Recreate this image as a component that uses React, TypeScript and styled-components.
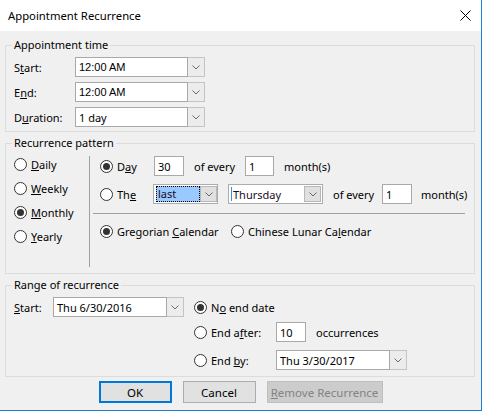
import React from 'react';
import styled, { createGlobalStyle } from 'styled-components';

const GlobalStyle = createGlobalStyle`
  html, body {
    margin: 0;
    padding: 0;
    background: #f0f0f0;
  }
`;

const Window = styled.div`
  box-sizing: border-box;
  width: 482px;
  height: 411px;
  background: #f0f0f0;
  border-right: 1px solid #1c7fd6;
  border-bottom: 1px solid #1c7fd6;
  font-family: 'Noto Sans', sans-serif;
  font-size: 11px;
  color: #000;
  display: flex;
  flex-direction: column;
  overflow: hidden;
`;

const TitleBar = styled.div`
  height: 31px;
  flex: none;
  background: #fff;
  display: flex;
  align-items: center;
  justify-content: space-between;
  padding: 0 10px 0 8px;
  font-size: 11.3px;
`;

const Body = styled.div`
  padding: 6px 6px 0 5px;
  display: flex;
  flex-direction: column;
`;

const Group = styled.fieldset<{ $pad: string }>`
  margin: 0;
  min-width: 0;
  border: 1px solid #dcdcdc;
  padding: ${({ $pad }) => $pad};
  & + & {
    margin-top: 3px;
  }
`;

const Legend = styled.legend`
  padding: 0 2px;
  margin-left: -2px;
  line-height: 16px;
  font-size: 11px;
`;

const TimeGrid = styled.div`
  display: grid;
  grid-template-columns: 61px auto;
  grid-auto-rows: 20px;
  row-gap: 5px;
  align-items: center;
`;

const Label = styled.span<{ $w?: number; $ml?: number }>`
  flex: none;
  white-space: nowrap;
  width: ${({ $w }) => ($w ? `${$w}px` : 'auto')};
  margin-left: ${({ $ml }) => $ml ?? 0}px;
`;

const Combo = styled.div<{ $ml?: number }>`
  display: flex;
  height: 20px;
  flex: none;
  margin-left: ${({ $ml }) => $ml ?? 0}px;
`;

const TextBox = styled.div<{ $w: number; $mono?: boolean }>`
  box-sizing: border-box;
  width: ${({ $w }) => $w}px;
  height: 20px;
  flex: none;
  background: #fff;
  border: 1px solid #a9a9a9;
  padding: 0 3px;
  display: flex;
  align-items: center;
  white-space: nowrap;
  font-family: ${({ $mono }) => ($mono ? "'Liberation Sans', Arial, sans-serif" : 'inherit')};
`;

const DropButton = styled.div`
  box-sizing: border-box;
  width: 17px;
  height: 20px;
  flex: none;
  border: 1px solid #c4c4c4;
  border-left: none;
  background: #ececec;
  display: flex;
  align-items: center;
  justify-content: center;
`;

const ListBox = styled.div<{ $w: number; $ml?: number }>`
  box-sizing: border-box;
  width: ${({ $w }) => $w}px;
  height: 20px;
  flex: none;
  margin-left: ${({ $ml }) => $ml ?? 0}px;
  border: 1px solid #acacac;
  background: #fff;
  padding: 1px;
  display: flex;
`;

const ListText = styled.div`
  flex: 1;
  display: flex;
  align-items: center;
  padding-left: 1px;
  color: #1a0b24;
`;

const Highlight = styled.span`
  background: #99c9ff;
  outline: 1px dotted #000;
  outline-offset: -1px;
  height: 16px;
  line-height: 16px;
  padding: 0 24px 0 2px;
`;

const Caret = styled.span`
  width: 1px;
  height: 14px;
  background: #3a8ee6;
  margin-right: 1px;
`;

const ListButton = styled.div`
  box-sizing: border-box;
  width: 17px;
  flex: none;
  background: #e0e0e0;
  border: 1px solid #b8b8b8;
  display: flex;
  align-items: center;
  justify-content: center;
`;

const PatternBody = styled.div`
  display: flex;
  align-items: flex-start;
`;

const FreqColumn = styled.div`
  width: 75px;
  padding-top: 3px;
  display: flex;
  flex-direction: column;
  gap: 4px;
`;

const VRule = styled.div`
  width: 1px;
  height: 111px;
  margin-top: 5px;
  background: #a0a0a0;
  flex: none;
`;

const PatternColumn = styled.div`
  flex: 1;
  padding: 5px 0 0 10px;
  display: flex;
  flex-direction: column;
`;

const Row = styled.div<{ $mt?: number }>`
  display: flex;
  align-items: center;
  height: 20px;
  margin-top: ${({ $mt }) => $mt ?? 0}px;
`;

const HRule = styled.div`
  height: 1px;
  width: 372px;
  margin: 9px 0 0 -7px;
  background: #a0a0a0;
`;

const RadioWrap = styled.label<{ $w?: number }>`
  display: flex;
  align-items: center;
  gap: 4px;
  height: 20px;
  flex: none;
  white-space: nowrap;
  width: ${({ $w }) => ($w ? `${$w}px` : 'auto')};
`;

const RadioDot = styled.span<{ $on?: boolean }>`
  box-sizing: border-box;
  width: 13px;
  height: 13px;
  flex: none;
  border-radius: 50%;
  border: 1px solid #333;
  background: #fff;
  display: flex;
  align-items: center;
  justify-content: center;
  &::after {
    content: '';
    width: 7px;
    height: 7px;
    border-radius: 50%;
    background: ${({ $on }) => ($on ? '#333' : 'transparent')};
  }
`;

const RangeBody = styled.div`
  display: flex;
  align-items: flex-start;
`;

const RangeStart = styled.div`
  display: flex;
  align-items: center;
  height: 20px;
`;

const RangeColumn = styled.div`
  margin-left: 10px;
  display: flex;
  flex-direction: column;
`;

const ButtonBar = styled.div`
  display: flex;
  justify-content: center;
  gap: 11px;
  margin-top: 4px;
  padding-left: 1px;
`;

const Button = styled.button<{ $w: number; $focus?: boolean }>`
  box-sizing: border-box;
  width: ${({ $w }) => $w}px;
  height: 22px;
  margin: 0;
  padding: 0;
  font-family: 'Noto Sans', sans-serif;
  font-size: 11.5px;
  color: #000;
  background: #e1e1e1;
  border: ${({ $focus }) => ($focus ? '2px solid #0078d7' : '1px solid #adadad')};
  &:disabled {
    background: #cccccc;
    border-color: #bfbfbf;
    color: #838383;
  }
`;

function Chevron() {
  return (
    <svg width="8" height="5" viewBox="0 0 8 5">
      <polyline points="0.5,0.5 4,4 7.5,0.5" fill="none" stroke="#6a6a6a" strokeWidth="1" />
    </svg>
  );
}

function CloseIcon() {
  return (
    <svg width="11" height="11" viewBox="0 0 11 11">
      <path d="M0.5 0.5 L10.5 10.5 M10.5 0.5 L0.5 10.5" stroke="#000" strokeWidth="1" />
    </svg>
  );
}

function Radio({ on, w, children }: { on?: boolean; w?: number; children: React.ReactNode }) {
  return (
    <RadioWrap $w={w}>
      <RadioDot $on={on} />
      <span>{children}</span>
    </RadioWrap>
  );
}

function DropCombo({ w, value, mono, ml }: { w: number; value: string; mono?: boolean; ml?: number }) {
  return (
    <Combo $ml={ml}>
      <TextBox $w={w} $mono={mono}>{value}</TextBox>
      <DropButton>
        <Chevron />
      </DropButton>
    </Combo>
  );
}

export default function App() {
  return (
    <>
      <GlobalStyle />
      <Window>
        <TitleBar>
          <span>Appointment Recurrence</span>
          <CloseIcon />
        </TitleBar>
        <Body>
          <Group $pad="4px 6px 4px 8px">
            <Legend>Appointment time</Legend>
            <TimeGrid>
              <Label>S<u>t</u>art:</Label>
              <DropCombo w={113} value="12:00 AM" mono />
              <Label>E<u>n</u>d:</Label>
              <DropCombo w={113} value="12:00 AM" mono />
              <Label>D<u>u</u>ration:</Label>
              <DropCombo w={113} value="1 day" />
            </TimeGrid>
          </Group>

          <Group $pad="0 6px 6px 8px">
            <Legend>Recurrence pattern</Legend>
            <PatternBody>
              <FreqColumn>
                <Radio><u>D</u>aily</Radio>
                <Radio><u>W</u>eekly</Radio>
                <Radio on><u>M</u>onthly</Radio>
                <Radio><u>Y</u>early</Radio>
              </FreqColumn>
              <VRule />
              <PatternColumn>
                <Row>
                  <Radio on w={54}>D<u>a</u>y</Radio>
                  <TextBox $w={30}>30</TextBox>
                  <Label $ml={10} $w={51}>of every</Label>
                  <TextBox $w={29}>1</TextBox>
                  <Label $ml={10}>month(s)</Label>
                </Row>
                <Row $mt={8}>
                  <Radio w={53}>Th<u>e</u></Radio>
                  <ListBox $w={65}>
                    <ListText>
                      <Highlight>last</Highlight>
                    </ListText>
                    <ListButton>
                      <Chevron />
                    </ListButton>
                  </ListBox>
                  <ListBox $w={95} $ml={10}>
                    <ListText>
                      <Caret />
                      Thursday
                    </ListText>
                    <ListButton>
                      <Chevron />
                    </ListButton>
                  </ListBox>
                  <Label $ml={10} $w={49}>of every</Label>
                  <TextBox $w={30}>1</TextBox>
                  <Label $ml={9}>month(s)</Label>
                </Row>
                <HRule />
                <Row $mt={7}>
                  <Radio on w={131}>Gregorian <u>C</u>alendar</Radio>
                  <Radio>Chinese Lunar Ca<u>l</u>endar</Radio>
                </Row>
              </PatternColumn>
            </PatternBody>
          </Group>

          <Group $pad="4px 6px 6px 8px">
            <Legend>Range of recurrence</Legend>
            <RangeBody>
              <RangeStart>
                <Label $w={39}><u>S</u>tart:</Label>
                <DropCombo w={114} value="Thu 6/30/2016" />
              </RangeStart>
              <RangeColumn>
                <Row>
                  <Radio on>N<u>o</u> end date</Radio>
                </Row>
                <Row $mt={5}>
                  <Radio w={82}>End a<u>f</u>ter:</Radio>
                  <TextBox $w={30}>10</TextBox>
                  <Label $ml={10}>occurrences</Label>
                </Row>
                <Row $mt={8}>
                  <Radio w={82}>End <u>b</u>y:</Radio>
                  <DropCombo w={114} value="Thu 3/30/2017" />
                </Row>
              </RangeColumn>
            </RangeBody>
          </Group>

          <ButtonBar>
            <Button $w={73} $focus>OK</Button>
            <Button $w={73}>Cancel</Button>
            <Button $w={116} disabled>
              <u>R</u>emove Recurrence
            </Button>
          </ButtonBar>
        </Body>
      </Window>
    </>
  );
}
